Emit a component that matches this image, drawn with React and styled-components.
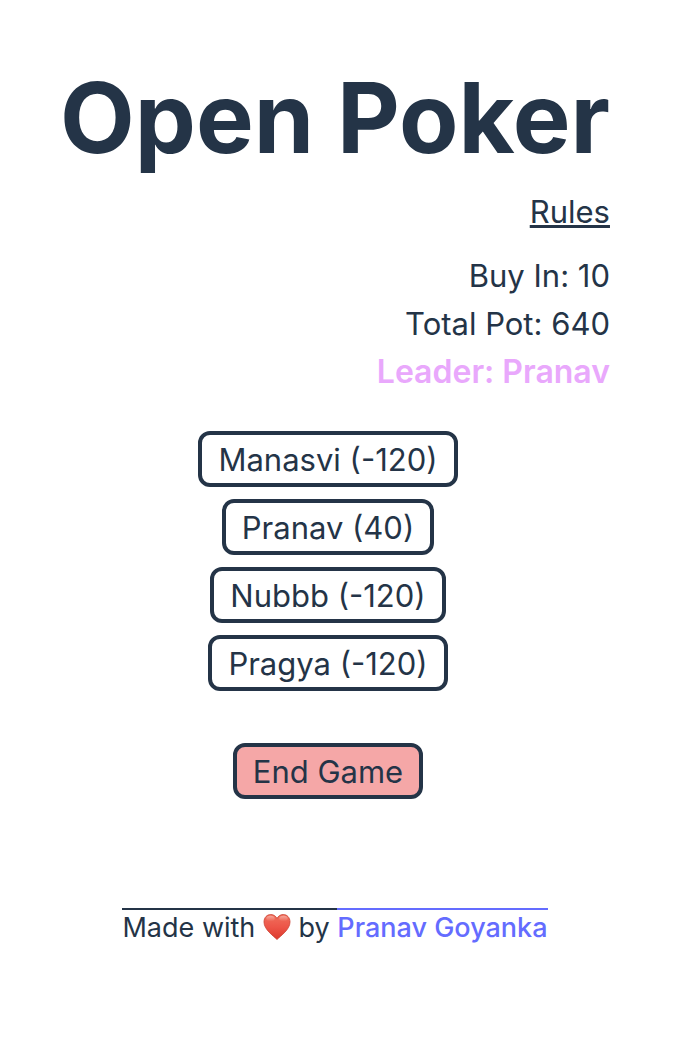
import React from "react";
import styled, { createGlobalStyle } from "styled-components";

const GlobalStyle = createGlobalStyle`
  * { box-sizing: border-box; }
  body {
    margin: 0;
    background: #fff;
    color: #243447;
    font-family: Inter, "Liberation Sans", sans-serif;
    font-size: 31px;
    line-height: 48px;
  }
`;

const Page = styled.main`
  display: flex;
  flex-direction: column;
  align-items: center;
  padding: 64px 16px 64px 0;
`;

const Game = styled.section`
  display: flex;
  flex-direction: column;
  align-items: flex-end;
`;

const Title = styled.h1`
  margin: 0;
  font-size: 97px;
  line-height: 108px;
  font-weight: 700;
  white-space: nowrap;
`;

const RulesLink = styled.a`
  margin: 16px 0;
  color: inherit;
  text-decoration: underline;
  text-decoration-thickness: 3px;
`;

const Stat = styled.p`
  margin: 0;
`;

const Leader = styled(Stat)`
  color: #e9a8fc;
  font-size: 32px;
  font-weight: 600;
`;

const Players = styled.div`
  display: flex;
  flex-direction: column;
  align-items: center;
  gap: 12px;
  margin: 35px 14px 52px 0;
`;

const GameButton = styled.button`
  padding: 2px 16px 0;
  border: 4px solid #243447;
  border-radius: 12px;
  background: ${({ $danger }) => ($danger ? "#f5a7a7" : "#fff")};
  color: inherit;
  font: inherit;
  line-height: 46px;
  cursor: pointer;
`;

const EndButton = styled(GameButton)`
  margin-right: 14px;
`;

const Footer = styled.footer`
  display: flex;
  margin-top: 109px;
  font-size: 27px;
  line-height: 36px;
  white-space: pre;
`;

const Credit = styled.span`
  border-top: 2px solid #243447;
`;

const AuthorLink = styled.a`
  border-top: 2px solid #646cff;
  color: #646cff;
  font-weight: 500;
  text-decoration: none;
`;

const HeartIcon = styled.svg`
  width: 28px;
  height: 28px;
  vertical-align: -4px;
`;

function Heart() {
  return (
    <HeartIcon viewBox="0 0 28 28" role="img" aria-label="love">
      <defs>
        <linearGradient id="heart-body" x1="0" y1="0" x2="0" y2="1">
          <stop offset="0" stopColor="#f0705c" />
          <stop offset="0.5" stopColor="#ed5548" />
          <stop offset="1" stopColor="#dc3a2c" />
        </linearGradient>
        <linearGradient id="heart-shine" x1="0" y1="0" x2="0" y2="1">
          <stop offset="0" stopColor="#fff" stopOpacity="0.4" />
          <stop offset="1" stopColor="#fff" stopOpacity="0" />
        </linearGradient>
      </defs>
      <path
        d="M14 26.500C10 22.500 1 16.500 1 9C1 4.500 4 1.500 7.700 1.500C10.500 1.500 12.800 3 14 5.500C15.200 3 17.500 1.500 20.300 1.500C24 1.500 27 4.500 27 9C27 16.500 18 22.500 14 26.500Z"
        fill="url(#heart-body)"
        stroke="#cc4032"
        strokeWidth="0.8"
      />
      <ellipse cx="7.500" cy="5.500" rx="4.200" ry="2.800" fill="url(#heart-shine)" />
      <ellipse cx="20.500" cy="5.500" rx="4.200" ry="2.800" fill="url(#heart-shine)" />
    </HeartIcon>
  );
}

const players = [
  ["Manasvi", -120],
  ["Pranav", 40],
  ["Nubbb", -120],
  ["Pragya", -120],
];

export default function App() {
  return (
    <>
      <GlobalStyle />
      <Page>
        <Game>
          <Title>Open Poker</Title>
          <RulesLink href="#rules">Rules</RulesLink>
          <Stat>Buy In: 10</Stat>
          <Stat>Total Pot: 640</Stat>
          <Leader>Leader: Pranav</Leader>
        </Game>
        <Players>
          {players.map(([name, score]) => (
            <GameButton key={name}>{`${name} (${score})`}</GameButton>
          ))}
        </Players>
        <EndButton $danger>End Game</EndButton>
        <Footer>
          <Credit>
            {"Made with "}
            <Heart />
            {" by "}
          </Credit>
          <AuthorLink href="#author">Pranav Goyanka</AuthorLink>
        </Footer>
      </Page>
    </>
  );
}
